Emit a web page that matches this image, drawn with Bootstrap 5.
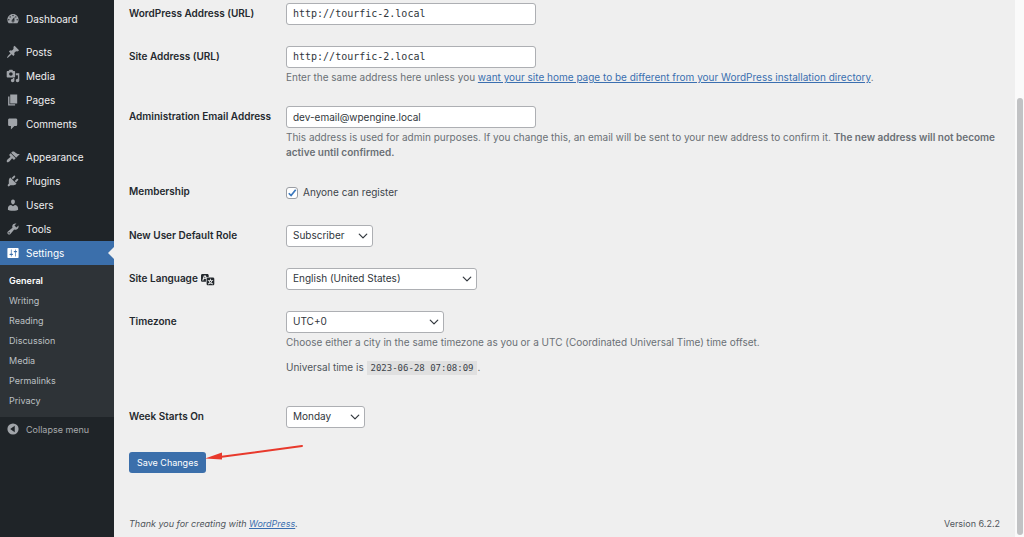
<!DOCTYPE html>
<html lang="en">
<head>
<meta charset="utf-8">
<meta name="viewport" content="width=device-width, initial-scale=1">
<title>General Settings</title>
<link rel="stylesheet" href="https://cdn.jsdelivr.net/npm/bootstrap@5.3.0/dist/css/bootstrap.min.css">
<style>
  body { font: 10px/15px Inter, "Liberation Sans", sans-serif; color: #3c434a; background: #efefef; }
  a { color: #3b6fb0; }
  .side-menu { width: 114px; flex: none; background: #1f2428; padding-top: 7px; }
  .menu-block { margin-bottom: 9px; }
  .menu-block:last-of-type { margin-bottom: 0; }
  .menu-item { height: 24px; gap: 6px; padding: 0 6px; color: #f0f0f1; text-decoration: none; border: 0; background: none; width: 100%; }
  .menu-item svg { width: 14px; height: 14px; fill: #a0a4a9; flex: none; }
  .menu-item.current { background: #3b6fab; color: #fff; position: relative; }
  .menu-item.current svg { fill: #fff; }
  .menu-item.current::after { content: ""; position: absolute; right: 0; top: 6px; border: 6px solid transparent; border-right-color: #efefef; border-left: 0; }
  .sub-menu { background: #2e3337; padding: 6px 0; }
  .sub-menu a { display: block; line-height: 20px; padding-left: 9px; font-size: 9px; color: #bcc0c4; text-decoration: none; }
  .sub-menu a.chosen { color: #fff; font-weight: 600; }
  .collapse-btn { color: #a7aaad; font-size: 9px; }
  .page-main { padding: 3px 15px 6px 15px; }
  .setting { margin-bottom: 21px; }
  .setting-name { width: 157px; flex: none; line-height: 21px; font-weight: 600; color: #24292e; }
  .setting-name svg { width: 14px; height: 14px; fill: #24292e; margin-left: 1px; }
  .form-control, .form-select { height: 22px; padding: 0 6px 1px; font-size: 10px; line-height: 19px; color: #30363c; border: 1px solid #adafb3; border-radius: 3px; background-color: #fff; }
  .form-control { width: 250px; }
  .form-select { background-position: right 4px center; background-size: 10px 10px; }
  .mono { font-family: "DejaVu Sans Mono", monospace; }
  .w-role { width: 87px; } .w-lang { width: 191px; } .w-zone { width: 158px; } .w-day { width: 79px; }
  .hint { margin: 2px 0 0; color: #6a6f75; }
  .hint.clock { margin-top: 9px; margin-bottom: 9px; line-height: 16px; color: #50565c; }
  .hint strong { font-weight: 600; }
  code { font: 9px/15px "DejaVu Sans Mono", monospace; color: #3c434a; background: #e0e0e0; padding: 2px 4px; }
  .register { height: 23px; gap: 5px; }
  .form-check-input.reg-box { width: 12px; height: 12px; margin: 0; border-color: #9a9da3; border-radius: 3px; }
  .reg-box:checked { background-color: #fff; background-size: 11px 11px; background-image: url("data:image/svg+xml,%3Csvg xmlns='http://www.w3.org/2000/svg' viewBox='0 0 20 20'%3E%3Cpath d='M4 10l4 4 8-10' fill='none' stroke='%233b78bd' stroke-width='3'/%3E%3C/svg%3E"); }
  .save-row { margin-top: 24px; position: relative; }
  .btn-save { height: 21px; padding: 0 8px; font-size: 9px; line-height: 21px; border: 0; border-radius: 3px; color: #fff; background: #3b6fab; }
  .pointer { position: absolute; left: 75px; top: -8px; width: 100px; height: 18px; }
  .page-foot { color: #50565c; font-size: 9px; }
  .scroll-track { width: 9px; flex: none; background: #fafafa; padding: 98px 1px 2px 2px; height: 100vh; }
  .scroll-thumb { height: 100%; border-radius: 3px; background: #c1c2c4; }
</style>
</head>
<body>
<div class="d-flex min-vh-100">
  <nav class="side-menu" aria-label="Admin menu">
    <div class="menu-block">
      <a class="menu-item d-flex align-items-center" href="#"><svg viewBox="0 0 20 20"><path d="M3.76 16h12.48c1.1-1.37 1.76-3.11 1.76-5 0-4.42-3.58-8-8-8s-8 3.58-8 8c0 1.89.66 3.63 1.76 5zM10 4c.55 0 1 .45 1 1s-.45 1-1 1-1-.45-1-1 .45-1 1-1zM6 6c.55 0 1 .45 1 1s-.45 1-1 1-1-.45-1-1 .45-1 1-1zm8 0c.55 0 1 .45 1 1s-.45 1-1 1-1-.45-1-1 .45-1 1-1zm-5.37 5.55L12 7v6c0 1.1-.9 2-2 2s-2-.9-2-2c0-.57.24-1.08.63-1.45zM4 10c.55 0 1 .45 1 1s-.45 1-1 1-1-.45-1-1 .45-1 1-1zm12 0c.55 0 1 .45 1 1s-.45 1-1 1-1-.45-1-1 .45-1 1-1zm-5 3c0-.55-.45-1-1-1s-1 .45-1 1 .45 1 1 1 1-.45 1-1z" fill-rule="evenodd"/></svg>Dashboard</a>
    </div>
    <div class="menu-block">
      <a class="menu-item d-flex align-items-center" href="#"><svg viewBox="0 0 20 20"><path d="M10.44 3.02l1.82-1.82 6.36 6.35-1.83 1.82c-1.05-.68-2.48-.57-3.41.36l-.75.75c-.92.93-1.04 2.35-.35 3.41l-1.83 1.82-2.41-2.41-2.8 2.79c-.42.42-3.38 2.71-3.8 2.29s1.86-3.39 2.28-3.81l2.79-2.79L4.1 9.36l1.83-1.82c1.05.69 2.48.57 3.4-.36l.75-.75c.93-.92 1.05-2.35.36-3.41z"/></svg>Posts</a>
      <a class="menu-item d-flex align-items-center" href="#"><svg viewBox="0 0 20 20"><path d="M13 11V4c0-.55-.45-1-1-1h-1.67L9 1H5L3.67 3H2c-.55 0-1 .45-1 1v7c0 .55.45 1 1 1h10c.55 0 1-.45 1-1zM7 4.5c1.38 0 2.5 1.12 2.5 2.5S8.38 9.5 7 9.5 4.5 8.38 4.5 7 5.62 4.5 7 4.5zM14 6h5v10.5c0 1.38-1.12 2.5-2.5 2.5S14 17.88 14 16.5s1.12-2.5 2.5-2.5c.17 0 .34.02.5.05V9h-3V6zm-4 8.05V13h2v3.5c0 1.38-1.12 2.5-2.5 2.5S7 17.88 7 16.5 8.12 14 9.5 14c.17 0 .34.02.5.05z" fill-rule="evenodd"/></svg>Media</a>
      <a class="menu-item d-flex align-items-center" href="#"><svg viewBox="0 0 20 20"><path d="M6 15V2h10v13H6zm-1 1h8v2H3V5h2v11z"/></svg>Pages</a>
      <a class="menu-item d-flex align-items-center" href="#"><svg viewBox="0 0 20 20"><path d="M5 2h9c1.1 0 2 .9 2 2v7c0 1.1-.9 2-2 2h-2l-5 5v-5H5c-1.1 0-2-.9-2-2V4c0-1.1.9-2 2-2z"/></svg>Comments</a>
    </div>
    <div class="menu-block">
      <a class="menu-item d-flex align-items-center" href="#"><svg viewBox="0 0 20 20"><path d="M14.48 11.06L7.41 3.99l1.5-1.5c.5-.56 2.3-.47 3.51.32 1.21.8 1.43 1.28 2.91 2.1 1.18.64 2.45 1.26 4.45.85zm-.71.71L6.7 4.7 4.93 6.47c-.39.39-.39 1.02 0 1.41l1.06 1.06c.39.39.39 1.03 0 1.42-.6.6-1.43 1.11-2.21 1.69-.35.26-.7.53-1.01.84C1.43 14.23.4 16.08 1.4 17.07c.99 1 2.84-.03 4.18-1.36.31-.31.58-.66.85-1.02.57-.78 1.08-1.61 1.69-2.21.39-.39 1.02-.39 1.41 0l1.06 1.06c.39.39 1.02.39 1.41 0z"/></svg>Appearance</a>
      <a class="menu-item d-flex align-items-center" href="#"><svg viewBox="0 0 20 20"><path d="M13.11 4.36L9.87 7.6 8 5.73l3.24-3.24c.35-.34 1.05-.2 1.56.32.52.51.66 1.21.31 1.55zm-8 1.77l.91-1.12 9.01 9.01-1.19.84c-.71.71-2.63 1.16-3.82 1.16H6.14L4.9 17.26c-.59.59-1.54.59-2.12 0-.59-.58-.59-1.53 0-2.12l1.24-1.24v-3.88c0-1.13.4-3.19 1.09-3.89zm7.26 3.97l3.24-3.24c.34-.35 1.04-.21 1.55.31.52.51.66 1.21.31 1.55l-3.24 3.25z"/></svg>Plugins</a>
      <a class="menu-item d-flex align-items-center" href="#"><svg viewBox="0 0 20 20"><path d="M10 9.25c-2.27 0-2.73-3.44-2.73-3.44C7 4.02 7.82 2 9.97 2c2.16 0 2.98 2.02 2.71 3.81 0 0-.41 3.44-2.68 3.44zm0 2.57L12.72 10c2.39 0 4.52 2.33 4.52 4.53v2.49s-3.65 1.13-7.24 1.13c-3.65 0-7.24-1.13-7.24-1.13v-2.49c0-2.25 1.94-4.48 4.47-4.48z"/></svg>Users</a>
      <a class="menu-item d-flex align-items-center" href="#"><svg viewBox="0 0 20 20"><path d="M16.68 9.77c-1.34 1.34-3.3 1.67-4.95.99l-5.41 6.52c-.99.99-2.59.99-3.58 0s-.99-2.59 0-3.57l6.52-5.42c-.68-1.65-.35-3.61.99-4.95 1.28-1.28 3.12-1.62 4.72-1.06l-2.89 2.89 2.82 2.82 2.86-2.87c.53 1.58.18 3.39-1.08 4.65zM3.81 16.21c.4.39 1.04.39 1.43 0 .4-.4.4-1.04 0-1.43-.39-.4-1.03-.4-1.43 0-.39.39-.39 1.03 0 1.43z" fill-rule="evenodd"/></svg>Tools</a>
      <a class="menu-item current d-flex align-items-center" href="#"><svg viewBox="0 0 20 20"><path d="M18 16V4c0-.55-.45-1-1-1H3c-.55 0-1 .45-1 1v12c0 .55.45 1 1 1h14c.55 0 1-.45 1-1zM8 11h1c.55 0 1 .45 1 1s-.45 1-1 1H8v1.5c0 .28-.22.5-.5.5s-.5-.22-.5-.5V13H6c-.55 0-1-.45-1-1s.45-1 1-1h1V5.5c0-.28.22-.5.5-.5s.5.22.5.5V11zm5-2h-1c-.55 0-1-.45-1-1s.45-1 1-1h1V5.5c0-.28.22-.5.5-.5s.5.22.5.5V7h1c.55 0 1 .45 1 1s-.45 1-1 1h-1v5.5c0 .28-.22.5-.5.5s-.5-.22-.5-.5V9z" fill-rule="evenodd"/></svg>Settings</a>
      <div class="sub-menu">
        <a class="chosen" href="#">General</a>
        <a href="#">Writing</a>
        <a href="#">Reading</a>
        <a href="#">Discussion</a>
        <a href="#">Media</a>
        <a href="#">Permalinks</a>
        <a href="#">Privacy</a>
      </div>
    </div>
    <button type="button" class="menu-item collapse-btn d-flex align-items-center"><svg viewBox="0 0 20 20"><path fill-rule="evenodd" d="M10 2a8 8 0 1 0 0 16 8 8 0 0 0 0-16zM12.500 5.500v9L6 10z"/></svg>Collapse menu</button>
  </nav>

  <main class="page-main flex-grow-1 d-flex flex-column">
    <form>
      <div class="setting d-flex">
        <label class="setting-name" for="wpurl">WordPress Address (URL)</label>
        <div><input class="form-control mono" id="wpurl" type="url" value="http://tourfic-2.local"></div>
      </div>
      <div class="setting d-flex">
        <label class="setting-name" for="home">Site Address (URL)</label>
        <div>
          <input class="form-control mono" id="home" type="url" value="http://tourfic-2.local">
          <p class="hint">Enter the same address here unless you <a href="#">want your site home page to be different from your WordPress installation directory</a>.</p>
        </div>
      </div>
      <div class="setting d-flex">
        <label class="setting-name" for="email">Administration Email Address</label>
        <div>
          <input class="form-control" id="email" type="email" value="dev-email@wpengine.local">
          <p class="hint">This address is used for admin purposes. If you change this, an email will be sent to your new address to confirm it. <strong>The new address will not become active until confirmed.</strong></p>
        </div>
      </div>
      <div class="setting d-flex">
        <div class="setting-name">Membership</div>
        <div class="register d-flex align-items-center">
          <input class="form-check-input reg-box" id="register" type="checkbox" checked>
          <label for="register">Anyone can register</label>
        </div>
      </div>
      <div class="setting d-flex">
        <label class="setting-name" for="role">New User Default Role</label>
        <div><select class="form-select w-role" id="role"><option>Subscriber</option></select></div>
      </div>
      <div class="setting d-flex">
        <label class="setting-name" for="lang">Site Language <svg viewBox="0 0 20 20" aria-hidden="true"><path fill-rule="evenodd" d="M11 7H9.49c-.63 0-1.25.3-1.59.7L7 5H4.13l-2.39 7h1.69l.74-2H7v4H2c-1.1 0-2-.9-2-2V5c0-1.1.9-2 2-2h7c1.1 0 2 .9 2 2v2zM6.51 9H4.49l1-2.930zM10 8h7c1.100 0 2 .9 2 2v7c0 1.100-.9 2-2 2h-7c-1.100 0-2-.9-2-2v-7c0-1.100.9-2 2-2zm7.250 5v-1.080h-3.170V9.750h-1.160v2.170H9.750V13h1.280c.11.85.56 1.850 1.280 2.620-.87.36-1.890.62-2.310.62-.01.02.22.97.2 1.460.84 0 2.210-.5 3.280-1.150 1.090.65 2.480 1.150 3.340 1.150-.02-.49.2-1.440.2-1.460-.43 0-1.490-.27-2.380-.63.7-.77 1.140-1.770 1.250-2.610h1.360zm-3.810 1.930c-.5-.46-.85-1.130-1.010-1.930h2.090c-.17.8-.51 1.470-1 1.930l-.04.03s-.03-.02-.04-.03z"/></svg></label>
        <div><select class="form-select w-lang" id="lang"><option>English (United States)</option></select></div>
      </div>
      <div class="setting d-flex">
        <label class="setting-name" for="zone">Timezone</label>
        <div>
          <select class="form-select w-zone" id="zone"><option>UTC+0</option></select>
          <p class="hint">Choose either a city in the same timezone as you or a UTC (Coordinated Universal Time) time offset.</p>
          <p class="hint clock">Universal time is <code>2023-06-28 07:08:09</code>.</p>
        </div>
      </div>
      <div class="setting d-flex">
        <label class="setting-name" for="day">Week Starts On</label>
        <div><select class="form-select w-day" id="day"><option>Monday</option></select></div>
      </div>
      <div class="save-row d-flex">
        <button type="submit" class="btn btn-save">Save Changes</button>
        <svg class="pointer" viewBox="0 0 100 18" aria-hidden="true"><path d="M98 2L12 13.500" fill="none" stroke="#e8392c" stroke-width="2" stroke-linecap="round"/><path d="M1 14.500L18 8.500v7z" fill="#e8392c"/></svg>
      </div>
    </form>
    <footer class="page-foot d-flex justify-content-between mt-auto">
      <em>Thank you for creating with <a href="#">WordPress</a>.</em>
      <span>Version 6.2.2</span>
    </footer>
  </main>
  <div class="scroll-track" aria-hidden="true"><div class="scroll-thumb"></div></div>
</div>
<script src="https://cdn.jsdelivr.net/npm/bootstrap@5.3.0/dist/js/bootstrap.bundle.min.js"></script>
</body>
</html>
